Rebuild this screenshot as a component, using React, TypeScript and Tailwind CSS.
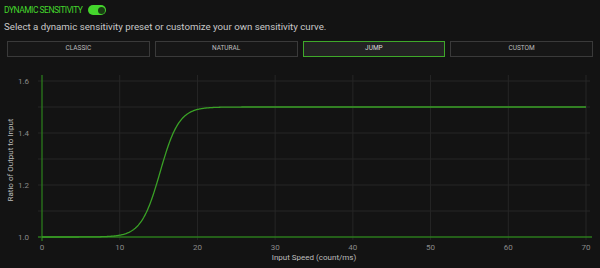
import React from "react";

const X0 = 42;
const X1 = 586;
const Y0 = 237; // value 1.0 (in page coordinates)
const Y1 = 81; // value 1.6
const TOP = 60; // svg top offset on page

const sx = (v: number) => X0 + ((X1 - X0) * v) / 70;
const sy = (v: number) => Y0 - ((Y0 - Y1) * (v - 1)) / 0.6 - TOP;

function curvePath() {
  const pts: string[] = [];
  for (let i = 0; i <= 700; i++) {
    const x = i / 10;
    const y = 1 + 0.5 / (1 + Math.exp(-0.82 * (x - 15.2)));
    pts.push(`${i === 0 ? "M" : "L"}${sx(x).toFixed(2)},${sy(y).toFixed(2)}`);
  }
  return pts.join(" ");
}

const buttons = ["CLASSIC", "NATURAL", "JUMP", "CUSTOM"];

export default function App() {
  return (
    <div className="w-[600px] h-[268px] bg-[#131313] overflow-hidden font-['Roboto',sans-serif] text-[#cfcfcf]">
      <div className="flex items-center h-[19px] pl-[4px] pt-[1px]">
        <span className="text-[8.5px] tracking-[-0.5px] text-[#44d62c] leading-none">DYNAMIC SENSITIVITY</span>
        <div className="ml-[6px] w-[18px] h-[10px] rounded-full bg-[#44d62c] flex items-center justify-end pr-[1.5px]">
          <div className="w-[7px] h-[7px] rounded-full bg-[#1a3d14]" />
        </div>
      </div>
      <div className="h-[15px] pl-[4px] text-[9.7px] leading-[15px] text-[#c8c8c8]">
        Select a dynamic sensitivity preset or customize your own sensitivity curve.
      </div>
      <div className="grid grid-cols-4 gap-[5px] px-[7px] pt-[7px]">
        {buttons.map((b) => (
          <div
            key={b}
            className={
              b === "JUMP"
                ? "h-[16px] border border-[#3fa82a] bg-[#232323] flex items-center justify-center text-[6.5px] text-[#d8d8d8]"
                : "h-[16px] border border-[#3a3a3a] bg-[#161616] flex items-center justify-center text-[6.5px] text-[#bdbdbd]"
            }
          >
            {b}
          </div>
        ))}
      </div>
      <svg width="600" height="208" className="block mt-[3px]" style={{ fontFamily: "Roboto, sans-serif" }}>
        {[1.1, 1.2, 1.3, 1.4, 1.5, 1.6].map((v) => (
          <line key={v} x1={38} x2={590} y1={sy(v)} y2={sy(v)} stroke="#262626" strokeWidth={1} />
        ))}
        {[10, 20, 30, 40, 50, 60, 70].map((v) => (
          <line key={v} x1={sx(v)} x2={sx(v)} y1={15} y2={180} stroke="#262626" strokeWidth={1} />
        ))}
        <line x1={38} x2={592} y1={sy(1)} y2={sy(1)} stroke="#2b7a1d" strokeWidth={1.3} />
        <line x1={sx(0)} x2={sx(0)} y1={15} y2={181} stroke="#2b7a1d" strokeWidth={1.3} />
        <path d={curvePath()} fill="none" stroke="#3aa126" strokeWidth={1.3} />
        {[1.0, 1.2, 1.4, 1.6].map((v) => (
          <text key={v} x={29} y={sy(v) + 3} textAnchor="end" fontSize={8} fill="#8a8a8a">
            {v.toFixed(1)}
          </text>
        ))}
        {[0, 10, 20, 30, 40, 50, 60, 70].map((v) => (
          <text key={v} x={sx(v)} y={190} textAnchor="middle" fontSize={8} fill="#8a8a8a">
            {v}
          </text>
        ))}
        <text x={314} y={200} textAnchor="middle" fontSize={8} fill="#bdbdbd">
          Input Speed (count/ms)
        </text>
        <text
          x={0}
          y={0}
          transform={`translate(13,${160 - TOP}) rotate(-90)`}
          textAnchor="middle"
          fontSize={8}
          fill="#bdbdbd"
        >
          Ratio of Output to Input
        </text>
      </svg>
    </div>
  );
}
